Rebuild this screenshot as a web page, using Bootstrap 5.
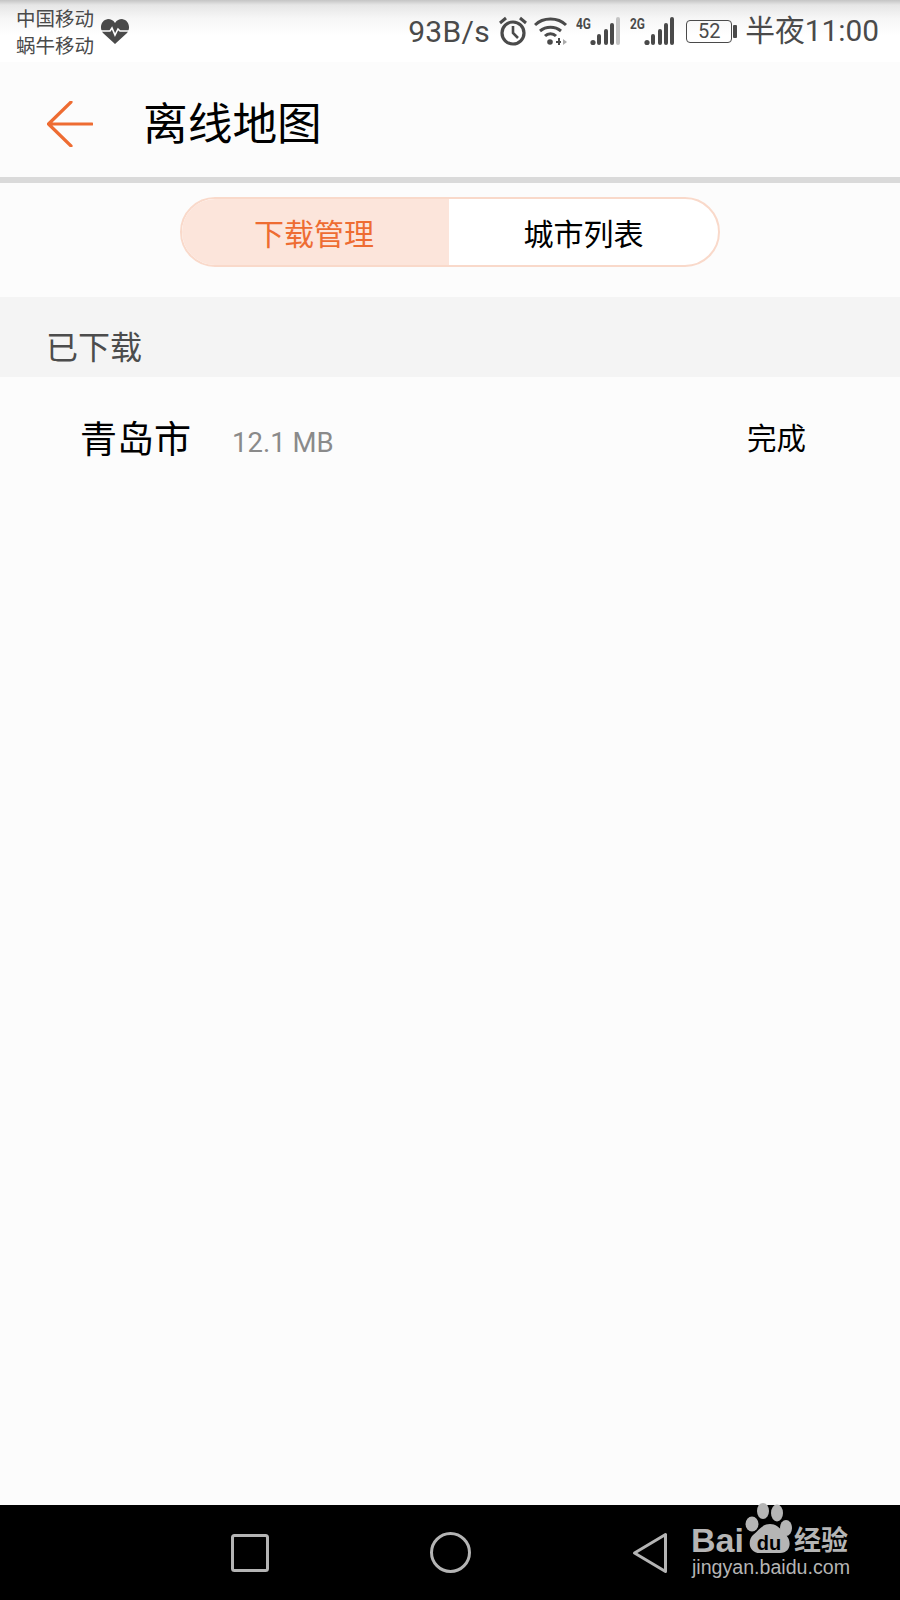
<!DOCTYPE html>
<html lang="zh-CN">
<head>
<meta charset="utf-8">
<title>离线地图</title>
<link href="https://cdn.jsdelivr.net/npm/bootstrap@5.3.0/dist/css/bootstrap.min.css" rel="stylesheet">
<style>
html,body{height:1600px;overflow:hidden}
body{font-family:Roboto,"Noto Sans CJK SC",sans-serif;background:#fcfcfc}
.phone{height:1600px;width:900px}
.sbar{height:62px;background:linear-gradient(#c4c4c4 0,#e6e6e6 5px,#f6f6f6 18px,#fff 36px);color:#4a4a4a;padding:0 21px 0 16px}
.carrier{font-size:19.5px;line-height:27px;padding-top:3px}
.heart{margin:0 0 0 6px}
.speed{font-size:30px;line-height:1;margin-top:1px;width:90px;letter-spacing:.3px}
.stat-clock{font-size:29.8px;line-height:1;margin-left:8px}
.ico-wifi{margin-left:6px}
.ico-sig2{margin-left:8px}
.ico-sig4{margin-left:8px}
.batt{width:46px;height:23px;border:1.5px solid #4a4a4a;border-radius:4px;font-size:20px;line-height:20px;text-align:center;margin-left:10px}
.batt-tip{width:4px;height:13px;background:#4a4a4a;border-radius:1px;margin-left:1px}
.abar{height:121px;border-bottom:6px solid #dadada;padding:8px 0 0 47px}
.abar h1{font-size:44.7px;line-height:1;font-weight:400;color:#000;margin:3px 0 0 50px}
.segwrap{height:114px;padding-top:14px}
.seg{width:540px;height:70px;border:2px solid #f9d9ca;border-radius:35px;overflow:hidden;background:#fff;font-size:30px}
.seg-on{width:267px;background:#fce5db;color:#ee6c32;padding:4px 3px 0 0}
.seg-off{color:#000;padding-top:4px}
.band{height:80px;background:#f4f4f4;color:#4c4c4c;font-size:32px;padding:33px 0 0 46px;line-height:36px}
.dlrow{height:127px;padding:0 94px 0 80px;color:#000}
.cityname{font-size:37px;line-height:1}
.citysize{font-size:27.5px;color:#8a8a8a;line-height:1;margin:4px 0 0 41px}
.done{font-size:29.5px;line-height:1;margin-bottom:2px}
.navb{height:95px;background:#000;padding:0 0 0 231px;gap:161px;margin-top:auto}
.wm{position:absolute;left:680px;top:1495px}
.wm text{font-family:"Liberation Sans",Roboto,"Noto Sans CJK SC",sans-serif}
</style>
</head>
<body>
<div class="phone d-flex flex-column position-relative">
  <div class="sbar d-flex align-items-center">
    <div class="carrier"><div>中国移动</div><div>蜗牛移动</div></div>
    <svg class="heart" width="30" height="27" viewBox="0 0 30 27"><path d="M15 26 3 15C-1 10 1 2 8 1c3 0 5 1 7 4 2-3 4-4 7-4 7 1 9 9 5 14z" fill="#4a4a4a"/><path d="M1 13h9l2-3 3 7 3-6 2 2h9" fill="none" stroke="#fff" stroke-width="1.6"/></svg>
    <div class="speed ms-auto">93B/s</div>
    <svg width="30" height="32" viewBox="0 0 30 32"><circle cx="15" cy="18" r="11" fill="none" stroke="#4a4a4a" stroke-width="3.2"/><path d="M15 11v7l5 5" fill="none" stroke="#4a4a4a" stroke-width="2.6"/><path d="M2 8 8 3M28 8 22 3" stroke="#4a4a4a" stroke-width="3"/></svg>
    <svg class="ico-wifi" width="34" height="30" viewBox="0 0 34 30"><path d="M1 9C9 1 24 1 32 9M6 15c6-5 15-5 21 0M11 20c3-3 8-3 11 0" fill="none" stroke="#4a4a4a" stroke-width="3"/><circle cx="16" cy="26" r="2.800" fill="#4a4a4a"/><path d="M25 22v7M22 26h5" stroke="#4a4a4a" stroke-width="2"/><path d="M29 23l4 3-4 3z" fill="#aaa"/></svg>
    <svg class="ico-sig4" width="46" height="30" viewBox="0 0 46 30"><text x="0" y="13" font-size="15" font-weight="700" font-family="Roboto" fill="#4a4a4a" textLength="15" lengthAdjust="spacingAndGlyphs">4G</text><circle cx="17" cy="26.500" r="2.600" fill="#4a4a4a"/><rect x="21" y="18" width="4" height="11" rx="2" fill="#4a4a4a"/><rect x="28" y="13" width="4" height="16" rx="2" fill="#4a4a4a"/><rect x="34" y="7" width="4" height="22" rx="2" fill="#4a4a4a"/><rect x="40" y="1" width="4" height="28" rx="2" fill="#c4c4c4"/></svg>
    <svg class="ico-sig2" width="46" height="30" viewBox="0 0 46 30"><text x="0" y="13" font-size="15" font-weight="700" font-family="Roboto" fill="#4a4a4a" textLength="15" lengthAdjust="spacingAndGlyphs">2G</text><circle cx="17" cy="26.500" r="2.600" fill="#4a4a4a"/><rect x="21" y="18" width="4" height="11" rx="2" fill="#4a4a4a"/><rect x="28" y="13" width="4" height="16" rx="2" fill="#4a4a4a"/><rect x="34" y="7" width="4" height="22" rx="2" fill="#4a4a4a"/><rect x="40" y="1" width="4" height="28" rx="2" fill="#4a4a4a"/></svg>
    <div class="batt">52</div><div class="batt-tip"></div>
    <div class="stat-clock">半夜11:00</div>
  </div>

  <div class="abar d-flex align-items-center">
    <svg width="46" height="46" viewBox="0 0 46 46" fill="none" stroke="#ee6c32" stroke-width="3.200" stroke-linecap="round" stroke-linejoin="round"><path d="M45 23H2M24 1 1.500 23 24 45"/></svg>
    <h1>离线地图</h1>
  </div>

  <div class="segwrap d-flex justify-content-center align-items-start">
    <div class="seg d-flex">
      <div class="seg-on d-flex align-items-center justify-content-center">下载管理</div>
      <div class="seg-off flex-grow-1 d-flex align-items-center justify-content-center">城市列表</div>
    </div>
  </div>

  <div class="band">已下载</div>

  <div class="dlrow d-flex align-items-center">
    <span class="cityname">青岛市</span>
    <span class="citysize">12.1 MB</span>
    <span class="done ms-auto">完成</span>
  </div>

  <div class="navb d-flex align-items-center">
    <svg width="38" height="38" viewBox="0 0 38 38"><rect x="1.500" y="1.500" width="35" height="35" rx="2" fill="none" stroke="#b4b4b4" stroke-width="3"/></svg>
    <svg width="41" height="41" viewBox="0 0 41 41"><circle cx="20.500" cy="20.500" r="19" fill="none" stroke="#b4b4b4" stroke-width="3"/></svg>
    <svg width="36" height="42" viewBox="0 0 36 42"><path d="M33.500 2.500v37L2.500 21z" fill="none" stroke="#b4b4b4" stroke-width="3" stroke-linejoin="round"/></svg>
  </div>

  <svg class="wm" width="190" height="95" viewBox="0 0 190 95">
    <g fill="#b5b5b5">
      <ellipse cx="83" cy="16" rx="6" ry="8"/>
      <ellipse cx="97" cy="18" rx="6" ry="8.500"/>
      <ellipse cx="72" cy="29" rx="6.500" ry="7.500"/>
      <ellipse cx="106" cy="33" rx="6" ry="8"/>
      <path d="M90 29c8 0 11 6 16 11 6 6 5 18-6 18H80c-11 0-13-12-7-18 6-5 9-11 17-11z"/>
    </g>
    <text x="89" y="55" font-size="20" font-weight="700" fill="#000" text-anchor="middle">du</text>
    <text x="11" y="57" font-size="34" font-weight="700" fill="#b5b5b5">Bai</text>
    <text x="114" y="55" font-size="27" font-weight="700" fill="#b5b5b5">经验</text>
    <text x="12" y="79" font-size="20" fill="#b5b5b5" textLength="158" lengthAdjust="spacingAndGlyphs">jingyan.baidu.com</text>
  </svg>
</div>
</body>
</html>
